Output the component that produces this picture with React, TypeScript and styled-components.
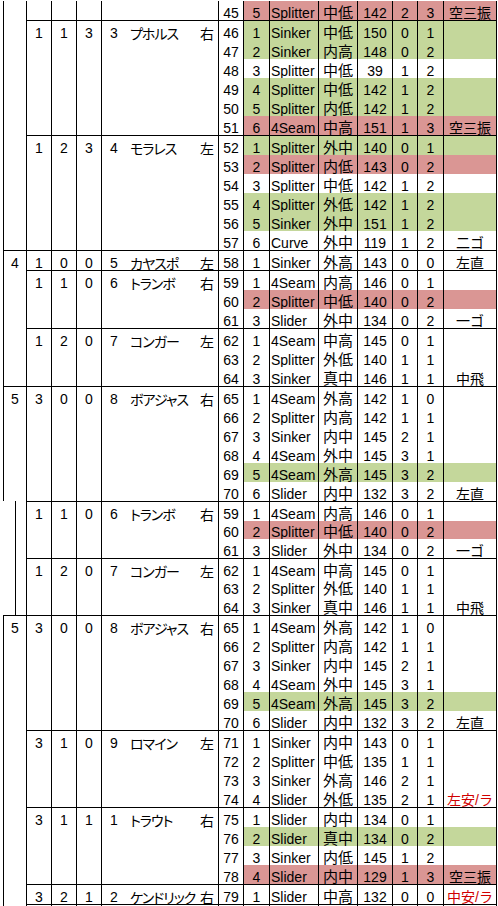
import styled, { createGlobalStyle } from "styled-components";

type Tone = "g" | "r" | undefined;

type Pitch = {
  n: number;
  type: string;
  loc: string;
  speed: number;
  b: number;
  s: number;
  res?: string;
  tone?: Tone;
  hit?: boolean;
};

const p = (
  n: number,
  type: string,
  loc: string,
  speed: number,
  b: number,
  s: number,
  res = "",
  tone?: Tone,
  hit = false
): Pitch => ({ n, type, loc, speed, b, s, res, tone, hit });

const PITCHES: Record<number, Pitch> = {
  45: p(5, "Splitter", "中低", 142, 2, 3, "空三振", "r"),
  46: p(1, "Sinker", "中低", 150, 0, 1, "", "g"),
  47: p(2, "Sinker", "内高", 148, 0, 2, "", "g"),
  48: p(3, "Splitter", "中低", 39, 1, 2),
  49: p(4, "Splitter", "中低", 142, 1, 2, "", "g"),
  50: p(5, "Splitter", "内低", 142, 1, 2, "", "g"),
  51: p(6, "4Seam", "中高", 151, 1, 3, "空三振", "r"),
  52: p(1, "Splitter", "外中", 140, 0, 1, "", "g"),
  53: p(2, "Splitter", "内低", 143, 0, 2, "", "r"),
  54: p(3, "Splitter", "中低", 142, 1, 2),
  55: p(4, "Splitter", "外低", 142, 1, 2, "", "g"),
  56: p(5, "Sinker", "外中", 151, 1, 2, "", "g"),
  57: p(6, "Curve", "外中", 119, 1, 2, "二ゴ"),
  58: p(1, "Sinker", "外高", 143, 0, 0, "左直"),
  59: p(1, "4Seam", "内高", 146, 0, 1),
  60: p(2, "Splitter", "中低", 140, 0, 2, "", "r"),
  61: p(3, "Slider", "外中", 134, 0, 2, "一ゴ"),
  62: p(1, "4Seam", "中高", 145, 0, 1),
  63: p(2, "Splitter", "外低", 140, 1, 1),
  64: p(3, "Sinker", "真中", 146, 1, 1, "中飛"),
  65: p(1, "4Seam", "外高", 142, 1, 0),
  66: p(2, "Splitter", "内高", 142, 1, 1),
  67: p(3, "Sinker", "内中", 145, 2, 1),
  68: p(4, "4Seam", "外中", 145, 3, 1),
  69: p(5, "4Seam", "外高", 145, 3, 2, "", "g"),
  70: p(6, "Slider", "内中", 132, 3, 2, "左直"),
  71: p(1, "Sinker", "内中", 143, 0, 1),
  72: p(2, "Splitter", "中低", 135, 1, 1),
  73: p(3, "Sinker", "外高", 146, 2, 1),
  74: p(4, "Slider", "外低", 135, 2, 1, "左安/ラ", undefined, true),
  75: p(1, "Slider", "内中", 134, 0, 1),
  76: p(2, "Slider", "真中", 134, 0, 2, "", "g"),
  77: p(3, "Sinker", "内低", 145, 1, 2),
  78: p(4, "Slider", "内中", 129, 1, 3, "空三振", "r"),
  79: p(1, "Slider", "中高", 132, 0, 0, "中安/ラ", undefined, true),
};

type BatterInfo = { out: number; runner: number; score: number; no: number; name: string; hand: string };

type Group = {
  info?: BatterInfo;
  rows: (number | null)[];
  ruled: boolean;
};

type Block = {
  label?: string;
  ruled: boolean;
  inset?: number;
  rowH: number;
  groups: Group[];
};

const range = (a: number, b: number) => Array.from({ length: b - a + 1 }, (_, i) => a + i);

const bat = (out: number, runner: number, score: number, no: number, name: string, hand: string): BatterInfo => ({
  out, runner, score, no, name, hand,
});

const BLOCKS: Block[] = [
  {
    ruled: false,
    rowH: 19,
    groups: [
      { rows: [45], ruled: false },
      { info: bat(1, 1, 3, 3, "プホルス", "右"), rows: range(46, 51), ruled: true },
      { info: bat(1, 2, 3, 4, "モラレス", "左"), rows: range(52, 57), ruled: true },
    ],
  },
  {
    label: "4",
    ruled: true,
    rowH: 19,
    groups: [
      { info: bat(1, 0, 0, 5, "カヤスポ", "左"), rows: [58], ruled: false },
      { info: bat(1, 1, 0, 6, "トランボ", "右"), rows: range(59, 61), ruled: true },
      { info: bat(1, 2, 0, 7, "コンガー", "左"), rows: range(62, 64), ruled: true },
    ],
  },
  {
    label: "5",
    ruled: true,
    rowH: 19,
    groups: [{ info: bat(3, 0, 0, 8, "ボアジャス", "右"), rows: range(65, 70), ruled: false }],
  },
  {
    ruled: false,
    inset: 12,
    rowH: 18.67,
    groups: [
      { info: bat(1, 1, 0, 6, "トランボ", "右"), rows: range(59, 61), ruled: true },
      { info: bat(1, 2, 0, 7, "コンガー", "左"), rows: range(62, 64), ruled: true },
    ],
  },
  {
    label: "5",
    ruled: true,
    rowH: 19,
    groups: [
      { info: bat(3, 0, 0, 8, "ボアジャス", "右"), rows: range(65, 70), ruled: false },
      { info: bat(3, 1, 0, 9, "ロマイン", "左"), rows: range(71, 74), ruled: true },
      { info: bat(3, 1, 1, 1, "トラウト", "右"), rows: range(75, 78), ruled: true },
      { info: bat(3, 2, 1, 2, "ケンドリック", "右"), rows: [79], ruled: true },
      { rows: [null], ruled: true },
    ],
  },
];

const App = () => {
  return (
    <>
      <GlobalStyle />
      <Sheet>
        {BLOCKS.map((block, bi) => (
          <Inning key={bi} $ruled={block.ruled}>
            <InningCol $inset={block.inset}>
              <Value $h={block.rowH}>{block.label}</Value>
            </InningCol>
            <Batters>
              {block.groups.map((g, gi) => (
                <Batter key={gi} $ruled={g.ruled}>
                  <Info $w={25}>
                    <Value $h={block.rowH}>{g.info?.out}</Value>
                  </Info>
                  <Info $w={25}>
                    <Value $h={block.rowH}>{g.info?.runner}</Value>
                  </Info>
                  <Info $w={25}>
                    <Value $h={block.rowH}>{g.info?.score}</Value>
                  </Info>
                  <Info $w={117}>
                    {g.info && (
                      <Player $h={block.rowH}>
                        <PlayerNo>{g.info.no}</PlayerNo>
                        <PlayerName>{g.info.name}</PlayerName>
                        <Hand>{g.info.hand}</Hand>
                      </Player>
                    )}
                  </Info>
                  <Pitches>
                    {g.rows.map((no, ri) => {
                      const d = no ? PITCHES[no] : undefined;
                      return (
                        <PitchRow key={ri} $h={block.rowH}>
                          <Cell $w={25}>{no}</Cell>
                          <Band $tone={d?.tone}>
                            <Cell $w={26}>{d?.n}</Cell>
                            <Cell $w={49} $left>{d?.type}</Cell>
                            <Cell $w={39} $jp>{d?.loc}</Cell>
                            <Cell $w={35}>{d?.speed}</Cell>
                            <Cell $w={25}>{d?.b}</Cell>
                            <Cell $w={26}>{d?.s}</Cell>
                            <Cell $w={53} $left={d?.hit} $hit={d?.hit}>{d?.res}</Cell>
                          </Band>
                        </PitchRow>
                      );
                    })}
                  </Pitches>
                </Batter>
              ))}
            </Batters>
          </Inning>
        ))}
      </Sheet>
    </>
  );
};

const GlobalStyle = createGlobalStyle`
  * { box-sizing: border-box; }
  body {
    margin: 0;
    background: #fff;
  }
`;

const Sheet = styled.div`
  width: 498px;
  height: 906px;
  overflow: hidden;
  padding: 1px 0 0 3px;
  font-family: "Liberation Sans", "Noto Sans CJK JP", sans-serif;
  font-size: 14px;
  color: #000;
`;

const Inning = styled.div<{ $ruled?: boolean }>`
  display: flex;
  width: 494px;
  border-top: ${(p) => (p.$ruled ? "1px solid #000" : "none")};
`;

const InningCol = styled.div<{ $inset?: number }>`
  flex-shrink: 0;
  width: ${(p) => 24 - (p.$inset ?? 0)}px;
  margin-left: ${(p) => p.$inset ?? 0}px;
  border-left: 1px solid #000;
  border-right: 1px solid #000;
`;

const Batters = styled.div`
  flex: 1;
  display: flex;
  flex-direction: column;
`;

const Batter = styled.div<{ $ruled?: boolean }>`
  display: flex;
  border-top: ${(p) => (p.$ruled ? "1px solid #000" : "none")};
`;

const Info = styled.div<{ $w: number }>`
  flex-shrink: 0;
  width: ${(p) => p.$w}px;
  border-right: 1px solid #000;
`;

const Value = styled.div<{ $h: number }>`
  height: ${(p) => p.$h}px;
  display: flex;
  align-items: flex-end;
  justify-content: center;
  line-height: 14px;
  white-space: nowrap;
`;

const Player = styled(Value)`
  justify-content: flex-start;
  padding: 0 4px 0 8px;
`;

const PlayerNo = styled.span`
  flex-shrink: 0;
  width: 20px;
`;

const PlayerName = styled.span`
  flex-shrink: 0;
  font-family: "Noto Sans CJK JP", sans-serif;
  font-feature-settings: "palt";
  letter-spacing: -1px;
`;

const Hand = styled.span`
  flex-shrink: 0;
  margin-left: auto;
  font-family: "Noto Sans CJK JP", sans-serif;
`;

const Pitches = styled.div`
  display: flex;
  flex-direction: column;
`;

const PitchRow = styled.div<{ $h: number }>`
  display: flex;
  height: ${(p) => p.$h}px;
`;

const Band = styled.div<{ $tone?: Tone }>`
  display: flex;
  background: ${(p) => (p.$tone === "g" ? "#c4d79b" : p.$tone === "r" ? "#da9694" : "#fff")};
`;

const Cell = styled.div<{ $w: number; $left?: boolean; $hit?: boolean; $jp?: boolean }>`
  flex-shrink: 0;
  width: ${(p) => p.$w}px;
  border-right: 1px solid #000;
  display: flex;
  align-items: flex-end;
  justify-content: ${(p) => (p.$left ? "flex-start" : "center")};
  padding-left: ${(p) => (p.$hit ? "3px" : p.$left ? "1px" : "0")};
  font-size: ${(p) => (p.$jp ? "15px" : "14px")};
  line-height: 14px;
  white-space: nowrap;
  overflow: hidden;
  color: ${(p) => (p.$hit ? "#d00000" : "#000")};
`;

export default App;
